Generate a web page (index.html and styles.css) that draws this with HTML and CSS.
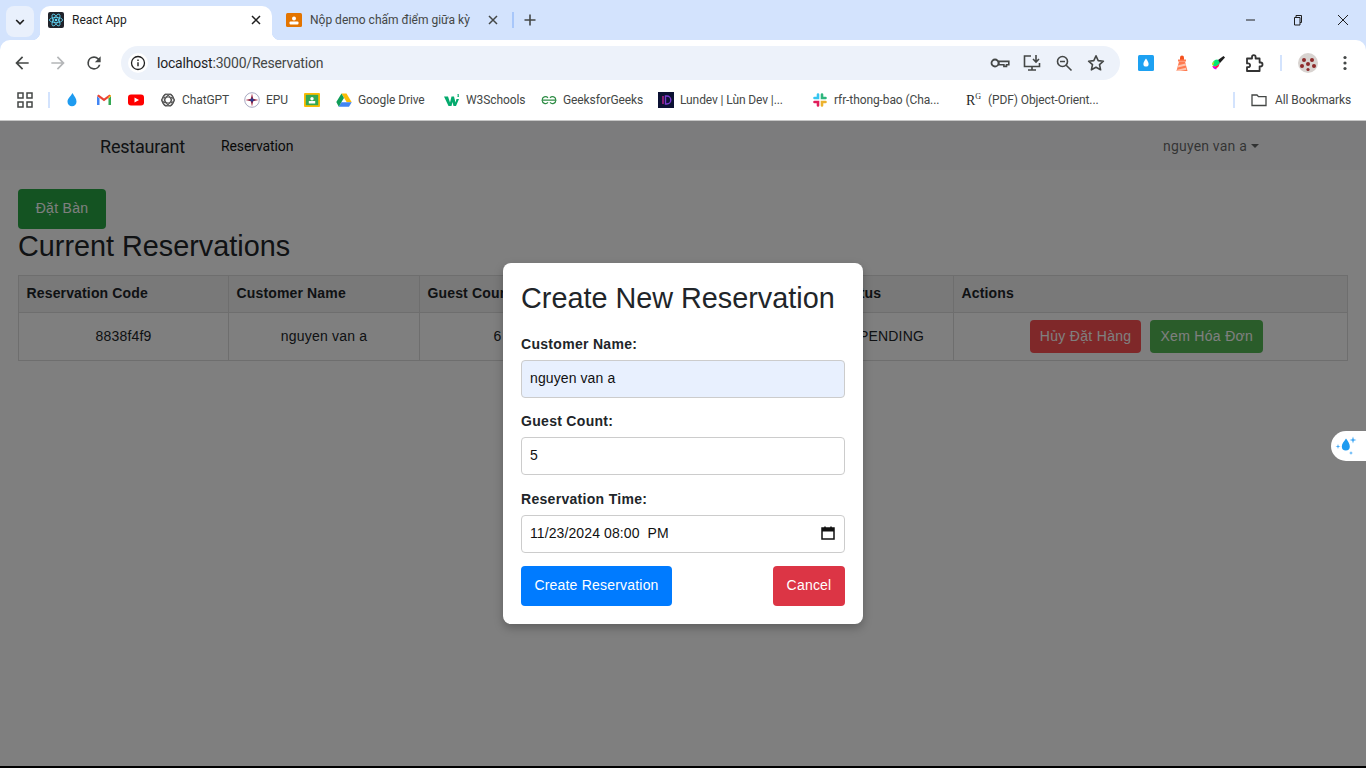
FILE: index.html
```html
<!DOCTYPE html>
<html lang="vi">
<head>
    <meta charset="UTF-8">
    <meta name="viewport" content="width=device-width, initial-scale=1.0">
    <title>React App</title>
    <link rel="stylesheet" href="styles.css">
</head>
<body>
    <!-- Pasek kart -->
    <header class="tabstrip">
        <div class="tab-search">
            <svg width="12" height="12" viewBox="0 0 12 12"><path d="M2.2 4l3.8 3.8L9.8 4" fill="none" stroke="#1f1f1f" stroke-width="1.7"/></svg>
        </div>
        <div class="tab tab-active">
            <svg class="favicon" viewBox="0 0 16 16">
                <rect width="16" height="16" rx="2" fill="#20232a"/>
                <g fill="none" stroke="#61dafb" stroke-width=".8">
                    <ellipse cx="8" cy="8" rx="6.6" ry="2.6"/>
                    <ellipse cx="8" cy="8" rx="6.6" ry="2.6" transform="rotate(60 8 8)"/>
                    <ellipse cx="8" cy="8" rx="6.6" ry="2.6" transform="rotate(120 8 8)"/>
                </g>
                <circle cx="8" cy="8" r="1.3" fill="#61dafb"/>
            </svg>
            <span class="tab-title">React App</span>
            <svg class="tab-close" viewBox="0 0 10 10"><path d="M1 1l8 8M9 1l-8 8" stroke="#1f1f1f" stroke-width="1.5"/></svg>
        </div>
        <div class="tab">
            <svg class="favicon" viewBox="0 0 16 16">
                <rect width="16" height="14" y="1" rx="1.5" fill="#e37400"/>
                <circle cx="8" cy="6.6" r="2" fill="#fff"/>
                <rect x="3.500" y="9.500" width="9" height="3" rx="1" fill="#fff"/>
            </svg>
            <span class="tab-title">Nộp demo chấm điểm giữa kỳ</span>
            <svg class="tab-close" viewBox="0 0 10 10"><path d="M1 1l8 8M9 1l-8 8" stroke="#444746" stroke-width="1.5"/></svg>
        </div>
        <span class="tab-sep"></span>
        <svg class="new-tab" width="12" height="12" viewBox="0 0 12 12"><path d="M6 .5v11M.5 6h11" stroke="#444746" stroke-width="1.6"/></svg>
        <div class="window-btns">
            <svg width="12" height="12" viewBox="0 0 12 12"><path d="M1 6h9" stroke="#1f1f1f" stroke-width="1"/></svg>
            <svg width="12" height="12" viewBox="0 0 12 12"><path d="M3.500 3.500h5.500v7.500h-5.500zM5 3.500V1.500h5.500v7H9" fill="none" stroke="#1f1f1f" stroke-width="1"/></svg>
            <svg width="12" height="12" viewBox="0 0 12 12"><path d="M1 1l10 10M11 1l-10 10" stroke="#1f1f1f" stroke-width="1"/></svg>
        </div>
    </header>

    <!-- Pasek adresu -->
    <div class="toolbar">
        <svg class="nav-icon" viewBox="0 0 24 24"><path d="M20 11H7.800l5.600-5.600L12 4l-8 8 8 8 1.400-1.400L7.800 13H20z" fill="#444746"/></svg>
        <svg class="nav-icon" viewBox="0 0 24 24"><path d="M4 11h12.200l-5.600-5.600L12 4l8 8-8 8-1.400-1.400 5.600-5.600H4z" fill="#b4b6b8"/></svg>
        <svg class="nav-icon" viewBox="0 0 24 24"><path d="M17.650 6.350A7.960 7.960 0 0 0 12 4a8 8 0 1 0 7.730 10h-2.080A6 6 0 1 1 12 6c1.660 0 3.140.69 4.220 1.780L13 11h7V4z" fill="#444746"/></svg>
        <div class="omnibox">
            <span class="info-chip">
                <svg width="16" height="16" viewBox="0 0 16 16"><circle cx="8" cy="8" r="6.500" fill="none" stroke="#1f1f1f" stroke-width="1.300"/><path d="M8 7.200v4M8 4.600v1.300" stroke="#1f1f1f" stroke-width="1.400"/></svg>
            </span>
            <span class="url"><span class="url-host">localhost</span>:3000/Reservation</span>
            <div class="omni-actions">
                <svg class="omni-icon" viewBox="0 0 20 20"><circle cx="5" cy="10" r="3.500" fill="none" stroke="#444746" stroke-width="1.800"/><path d="M8.800 8.400h10v3.400h-2.300v1.600h-2.600v-1.600H8.800z" fill="none" stroke="#444746" stroke-width="1.600"/></svg>
                <svg class="omni-icon" viewBox="0 0 20 20"><path d="M9 3H2.500v10.500h15V10M6 17h8M10 13.500V17" fill="none" stroke="#444746" stroke-width="1.600"/><path d="M14 2v6.500M11 6l3 3 3-3" fill="none" stroke="#444746" stroke-width="1.600"/></svg>
                <svg class="omni-icon" viewBox="0 0 20 20"><circle cx="8.500" cy="8.500" r="5" fill="none" stroke="#444746" stroke-width="1.600"/><path d="M12.200 12.200L17.500 17.500M6 8.500h5" stroke="#444746" stroke-width="1.600"/></svg>
                <svg class="omni-icon" viewBox="0 0 20 20"><path d="M10 2.800l2.200 4.800 5.200.6-3.900 3.500 1.100 5.100L10 14.200l-4.600 2.600 1.100-5.100L2.600 8.200l5.200-.6z" fill="none" stroke="#444746" stroke-width="1.600" stroke-linejoin="round"/></svg>
            </div>
        </div>
        <div class="extensions">
            <svg class="ext-icon" viewBox="0 0 16 16"><rect width="16" height="16" rx="1.500" fill="#1da1f2"/><path d="M8 3.500c1.500 2.300 2.600 3.700 2.600 5.400a2.600 2.600 0 0 1-5.200 0C5.400 7.200 6.500 5.800 8 3.500z" fill="#fff"/></svg>
            <svg class="ext-icon" viewBox="0 0 16 16"><path d="M6 2.500a2 2 0 0 1 4 0V5H6z" fill="#f4511e"/><rect x="4" y="4.500" width="8" height="2" fill="#ff7a50"/><path d="M5 6.500h6L13.500 16h-11z" fill="#ff7a50"/><path d="M4.300 10.300l7.300-1.700.5 2-8.300 1.800zM3.200 14.800l8.700-2 .5 2-6 1.200H3z" fill="#ffc4ae"/></svg>
            <svg class="ext-icon" viewBox="0 0 16 16"><path d="M2 9c.5-2.500 3-4.500 5.500-4.500l2.500 3C9 11 3.500 13 2 9z" fill="#00e676"/><path d="M2.500 11C4.500 12 8 11 10 7.500L8.500 11.500c-1.500 2-4.500 2-6 0z" fill="#ff1744"/><path d="M2.500 11.500c1 2.500 3 3.500 4.500 2.200L4.500 11.800z" fill="#d500f9"/><path d="M2 9l2.500-3L3 10.500z" fill="#ffea00"/><path d="M8 5l5.500-4 1.500 1.500L10 8z" fill="#1f1f1f"/></svg>
            <svg class="ext-icon ext-puzzle" viewBox="0 0 20 20"><path d="M3 5.500h5V4a1.800 1.800 0 0 1 3.600 0v1.500h4v4h1a1.900 1.900 0 0 1 0 3.800h-1V18H3v-3.800h1.200a1.900 1.900 0 0 0 0-3.800H3z" fill="none" stroke="#333" stroke-width="1.800" stroke-linejoin="round"/></svg>
            <span class="toolbar-sep"></span>
            <svg class="avatar" viewBox="0 0 20 20">
                <circle cx="10" cy="10" r="10" fill="#d8d3d0"/>
                <g fill="#8e2a2a">
                    <circle cx="6" cy="7" r="2"/><circle cx="14" cy="7" r="2"/>
                    <circle cx="4" cy="13" r="2"/><circle cx="16" cy="13" r="2"/>
                    <circle cx="10" cy="11" r="2"/><circle cx="10" cy="16.500" r="1.600"/>
                </g>
            </svg>
            <svg class="kebab" width="4" height="16" viewBox="0 0 4 16"><circle cx="2" cy="2.500" r="1.600" fill="#444746"/><circle cx="2" cy="8" r="1.600" fill="#444746"/><circle cx="2" cy="13.500" r="1.600" fill="#444746"/></svg>
        </div>
    </div>

    <!-- Zakładki -->
    <nav class="bookmarks">
        <svg class="apps-icon" viewBox="0 0 16 16"><g fill="none" stroke="#444746" stroke-width="1.500"><rect x="1" y="1" width="5" height="5"/><rect x="10" y="1" width="5" height="5"/><rect x="1" y="10" width="5" height="5"/><rect x="10" y="10" width="5" height="5"/></g></svg>
        <span class="bm-sep"></span>
        <a class="bm">
            <svg class="bm-icon" viewBox="0 0 16 16"><path d="M8.500 1c2 3.500 4 5.600 4 8.700a4.500 4.500 0 0 1-9 0C3.500 6.600 6.500 4.500 8.500 1z" fill="#1e9bf0"/></svg>
        </a>
        <a class="bm">
            <svg class="bm-icon" viewBox="0 0 16 16"><path d="M1 4v9h2.500V6.500z" fill="#4285f4"/><path d="M12.500 6.500V13H15V4z" fill="#34a853"/><path d="M1 4l7 5.200L15 4l-1.500-1.500L8 6.500 2.500 2.500z" fill="#ea4335"/><path d="M12.500 4.500L15 3v1l-2.500 2.500z" fill="#fbbc04"/></svg>
        </a>
        <a class="bm">
            <svg class="bm-icon" viewBox="0 0 16 16"><rect y="2.500" width="16" height="11" rx="3" fill="#f00"/><path d="M6.500 5.500L11 8l-4.500 2.500z" fill="#fff"/></svg>
        </a>
        <a class="bm">
            <svg class="bm-icon" viewBox="0 0 16 16"><g fill="none" stroke="#555" stroke-width="1.100"><circle cx="8" cy="8" r="6"/><ellipse cx="8" cy="8" rx="6.500" ry="3" transform="rotate(60 8 8)"/><ellipse cx="8" cy="8" rx="6.500" ry="3" transform="rotate(120 8 8)"/><ellipse cx="8" cy="8" rx="6.500" ry="3"/></g></svg>
            <span class="bm-chat">ChatGPT</span>
        </a>
        <a class="bm">
            <svg class="bm-icon" viewBox="0 0 16 16"><circle cx="8" cy="8" r="7.300" fill="#fff" stroke="#a9a9c2" stroke-width="1"/><path d="M8 1.500L9.200 6.800 14.500 8 9.200 9.200 8 14.500 6.800 9.200 1.500 8 6.800 6.800z" fill="#a4243b"/><path d="M8 5l1 2 2 1-2 1-1 2-1-2-2-1 2-1z" fill="#2a3a8c"/></svg>
            <span class="bm-epu">EPU</span>
        </a>
        <a class="bm">
            <svg class="bm-icon" viewBox="0 0 16 16"><rect y="1" width="16" height="14" rx="1" fill="#fbbc04"/><rect x="1.800" y="2.800" width="12.400" height="10.400" fill="#34a853"/><circle cx="8" cy="6.800" r="1.700" fill="#fff"/><rect x="4.800" y="9" width="6.400" height="2.500" fill="#fff"/></svg>
        </a>
        <a class="bm">
            <svg class="bm-icon" viewBox="0 0 16 16"><path d="M5.500 1.500h5l5.200 8.800h-5z" fill="#fbbc04"/><path d="M5.300 10.300h10.400L13 14.700H2.700z" fill="#4285f4"/><path d="M5.500 1.500L8 6 5.300 10.300 2.800 14.700.3 10z" fill="#0f9d58"/></svg>
            <span class="bm-drive">Google Drive</span>
        </a>
        <a class="bm">
            <svg class="bm-icon" viewBox="0 0 16 16"><path d="M0 4.500h4l2 6 1.500-6h2.500l1.500 6 1-3.500h2.500L12 14H9.500L8.500 10 7.500 14H4.500z" fill="#04aa6d"/><path d="M13 2h2v.8h-1v.4h1V5h-2v-.5h1.300v-.6h-1v-.4h1v-.9H13z" fill="#04aa6d"/></svg>
            <span class="bm-w3">W3Schools</span>
        </a>
        <a class="bm">
            <svg class="bm-icon" viewBox="0 0 16 16"><g fill="none" stroke="#2f8d46" stroke-width="1.200"><path d="M8 8.200H1.200a3.300 3.300 0 0 1 5.800-2.400M8 8.200h6.800A3.300 3.300 0 0 0 9 5.800"/><path d="M1.200 8.200a3.300 3.300 0 0 0 5.800 2.200M14.800 8.200a3.300 3.300 0 0 1-5.800 2.200"/></g></svg>
            <span class="bm-gfg">GeeksforGeeks</span>
        </a>
        <a class="bm">
            <svg class="bm-icon" viewBox="0 0 16 16"><rect width="16" height="16" fill="#0c1133"/><path d="M5 4v8" stroke="#c0258f" stroke-width="1.400"/><path d="M7.500 4h1.300a4 4 0 0 1 0 8H7.500z" fill="none" stroke="#7a3bd1" stroke-width="1.400"/></svg>
            <span class="bm-clip">Lundev | Lùn Dev |...</span>
        </a>
        <a class="bm">
            <svg class="bm-icon" viewBox="0 0 16 16"><g stroke-linecap="round" fill="none" stroke-width="2.600"><path d="M6 2.500v3.500H2.500" stroke="#36c5f0"/><path d="M13.500 6H10V2.500" stroke="#2eb67d"/><path d="M10 13.500V10h3.500" stroke="#ecb22e"/><path d="M2.500 10H6v3.500" stroke="#e01e5a"/></g></svg>
            <span class="bm-clip">rfr-thong-bao (Cha...</span>
        </a>
        <a class="bm">
            <span class="bm-rg">R<sup>G</sup></span>
            <span class="bm-clip">(PDF) Object-Orient...</span>
        </a>
        <span class="bm-sep bm-sep-end"></span>
        <a class="bm bm-all">
            <svg class="bm-icon" viewBox="0 0 16 16"><path d="M1 3h5l1.500 1.700H15V13.500H1z" fill="none" stroke="#444746" stroke-width="1.300"/></svg>
            <span>All Bookmarks</span>
        </a>
    </nav>

    <!-- Strona -->
    <main class="page">
        <div class="navbar">
            <span class="brand">Restaurant</span>
            <a class="nav-link">Reservation</a>
            <span class="user-menu">nguyen van a<i class="caret"></i></span>
        </div>

        <div class="content">
            <button class="btn btn-book">Đặt Bàn</button>
            <h2>Current Reservations</h2>
            <table class="res-table">
                <thead>
                    <tr>
                        <th class="col-code">Reservation Code</th>
                        <th class="col-name">Customer Name</th>
                        <th class="col-count">Guest Count</th>
                        <th class="col-time"></th>
                        <th class="col-status">Status</th>
                        <th>Actions</th>
                    </tr>
                </thead>
                <tbody>
                    <tr>
                        <td>8838f4f9</td>
                        <td>nguyen van a</td>
                        <td>6</td>
                        <td></td>
                        <td>PENDING</td>
                        <td class="td-actions">
                            <button class="btn btn-cancel">Hủy Đặt Hàng</button>
                            <button class="btn btn-bill">Xem Hóa Đơn</button>
                        </td>
                    </tr>
                </tbody>
            </table>
        </div>

        <div class="overlay">
            <form class="modal">
                <h2 class="modal-title">Create New Reservation</h2>
                <label class="field-label" for="customer">Customer Name:</label>
                <input class="field field-filled" id="customer" type="text" value="nguyen van a">
                <label class="field-label" for="guests">Guest Count:</label>
                <input class="field" id="guests" type="text" value="5">
                <label class="field-label field-label-time" for="time">Reservation Time:</label>
                <div class="field field-date">
                    <input class="date-text" id="time" type="text" value="11/23/2024 08:00  PM">
                    <svg width="16" height="16" viewBox="0 0 16 16"><path d="M2 3h12v11H2z" fill="none" stroke="#111" stroke-width="1.500"/><path d="M2 3h12v3.500H2z" fill="#111"/><path d="M5 1.500v2M11 1.500v2" stroke="#111" stroke-width="1.500"/></svg>
                </div>
                <div class="modal-actions">
                    <button class="modal-btn modal-create" type="button">Create Reservation</button>
                    <button class="modal-btn modal-cancel" type="button">Cancel</button>
                </div>
            </form>
        </div>

        <div class="float-widget">
            <svg width="24" height="24" viewBox="0 0 24 24">
                <path d="M13 4.500c2 3 3.800 5 3.800 8a4 4 0 0 1-8 0C8.800 9.800 11 7.500 13 4.500z" fill="#1e9bf0"/>
                <path d="M20 2.500l.8 2.700 2.700.8-2.700.8L20 9.500l-.8-2.700-2.700-.8 2.700-.8zM5 10l.6 1.900 1.900.6-1.900.6L5 15l-.6-1.900-1.900-.6 1.900-.6zM18 17l.5 1.500 1.500.5-1.500.5L18 21l-.5-1.500-1.500-.5 1.500-.5z" fill="#3ea6f5"/>
            </svg>
        </div>
    </main>
</body>
</html>
```
FILE: styles.css
```css
* {
    box-sizing: border-box;
    margin: 0;
    padding: 0;
}

html, body {
    height: 768px;
    overflow: hidden;
}

body {
    font-family: "Roboto", "Noto Sans", sans-serif;
    background-color: #d3e3fd;
    display: flex;
    flex-direction: column;
}

/* karty */
.tabstrip {
    height: 40px;
    flex: none;
    display: flex;
    align-items: flex-end;
    padding-left: 6px;
}

.tab-search {
    width: 28px;
    height: 31px;
    margin-bottom: 3px;
    margin-right: 6px;
    background-color: #e9f0fc;
    border-radius: 8px;
    display: flex;
    align-items: center;
    justify-content: center;
}

.tab {
    width: 232px;
    height: 34px;
    display: flex;
    align-items: center;
    padding: 0 8px 6px 8px;
    font-size: 12px;
    color: #444746;
    position: relative;
}

.tab + .tab {
    padding-left: 14px;
    padding-right: 14px;
    width: 243px;
}

.tab-active {
    background-color: #fff;
    color: #1f1f1f;
    border-radius: 10px 10px 0 0;
}

.tab-active::before, .tab-active::after {
    content: "";
    position: absolute;
    bottom: 0;
    width: 8px;
    height: 8px;
}

.tab-active::before {
    left: -8px;
    background: radial-gradient(circle at 0 0, transparent 8px, #fff 8.5px);
}

.tab-active::after {
    right: -8px;
    background: radial-gradient(circle at 100% 0, transparent 8px, #fff 8.5px);
}

.favicon {
    width: 16px;
    height: 16px;
    flex: none;
    margin-right: 8px;
}

.tab-title {
    flex: 1;
    white-space: nowrap;
    overflow: hidden;
}

.tab-close {
    width: 10px;
    height: 10px;
    flex: none;
    margin-right: 3px;
}

.tab-sep {
    width: 2px;
    height: 16px;
    background-color: #a8c7fa;
    margin: 0 0 12px -3px;
}

.new-tab {
    margin: 0 0 14px 10px;
}

.window-btns {
    margin-left: auto;
    display: flex;
    gap: 34px;
    padding-right: 17px;
    margin-bottom: 14px;
}

/* pasek adresu */
.toolbar {
    height: 45px;
    flex: none;
    background-color: #fff;
    border-radius: 10px 10px 0 0;
    display: flex;
    align-items: center;
    padding: 0 0 0 12px;
}

.nav-icon {
    width: 20px;
    height: 20px;
    margin-right: 16px;
    flex: none;
}

.omnibox {
    width: 999px;
    height: 34px;
    margin-left: 1px;
    background-color: #edf2fa;
    border-radius: 17px;
    display: flex;
    align-items: center;
    padding-left: 7px;
}

.info-chip {
    width: 20px;
    height: 20px;
    background-color: #fff;
    border-radius: 50%;
    display: flex;
    align-items: center;
    justify-content: center;
    margin-right: 9px;
}

.url {
    font-size: 14px;
    letter-spacing: -.2px;
    color: #444746;
}

.url-host {
    color: #1f1f1f;
}

.omni-actions {
    margin-left: auto;
    display: flex;
    gap: 12px;
    padding-right: 14px;
}

.omni-icon {
    width: 20px;
    height: 20px;
}

.extensions {
    display: flex;
    align-items: center;
    padding-left: 18px;
}

.ext-icon {
    width: 16px;
    height: 16px;
    margin-right: 20px;
    flex: none;
}

.ext-puzzle {
    width: 20px;
    height: 20px;
    margin: 0 16px 0 -2px;
}

.toolbar-sep {
    width: 2px;
    height: 16px;
    background-color: #d3e3fd;
    margin-right: 16px;
}

.avatar {
    width: 20px;
    height: 20px;
    margin-right: 25px;
}

/* zakladki */
.bookmarks {
    height: 36px;
    flex: none;
    background-color: #fff;
    border-bottom: 1px solid #c7c7c7;
    display: flex;
    align-items: center;
    padding: 0 15px 5px 17px;
    font-size: 12px;
    letter-spacing: -.1px;
    color: #444746;
}

.apps-icon {
    width: 16px;
    height: 16px;
    flex: none;
}

.bm-sep {
    width: 2px;
    height: 16px;
    background-color: #d3e3fd;
    margin: 0 6px 0 15px;
}

.bm-sep-end {
    margin: 0 0 0 auto;
}

.bm {
    display: flex;
    align-items: center;
    padding: 0 8px;
    white-space: nowrap;
}

.bm-all {
    padding-right: 0;
    margin-left: 8px;
    padding-left: 8px;
}

.bm-icon {
    width: 16px;
    height: 16px;
    flex: none;
}

.bm-icon + span {
    margin-left: 6px;
}

.bm-all .bm-icon + span {
    margin-left: 8px;
}

.bm-chat { width: 46px; }
.bm-epu { width: 22px; }
.bm-drive { width: 70px; }
.bm-w3 { width: 59px; }
.bm-gfg { width: 79px; }

.bm-clip {
    width: 116px;
    overflow: hidden;
}

.bm-rg {
    width: 16px;
    margin-right: 6px;
    font-family: "Liberation Serif", serif;
    font-size: 14px;
    color: #1f1f1f;
}

.bm-rg sup {
    font-size: 8px;
}

/* strona */
.page {
    flex: 1;
    background-color: #fff;
    position: relative;
    font-family: "Liberation Sans", Arial, sans-serif;
    font-size: 14px;
    color: #212529;
    border-bottom: 2px solid #000;
}

.navbar {
    height: 49px;
    background-color: #f8f9fa;
    display: flex;
    align-items: center;
    padding: 0 107px 0 100px;
    font-family: "Roboto", "Noto Sans", sans-serif;
}

.brand {
    font-size: 18px;
    letter-spacing: -.2px;
    color: #212529;
    margin-right: 36px;
    padding-top: 2px;
}

.nav-link {
    color: #111;
    font-size: 14px;
    letter-spacing: -.1px;
}

.user-menu {
    margin-left: auto;
    color: rgba(0, 0, 0, .6);
    font-size: 14px;
    letter-spacing: .2px;
}

.caret {
    display: inline-block;
    margin-left: 4px;
    vertical-align: 3px;
    border-top: 4px solid;
    border-left: 4px solid transparent;
    border-right: 4px solid transparent;
}

.content {
    padding: 19px 18px 0;
}

.btn {
    border: none;
    border-radius: 4px;
    color: #fff;
    font-family: "Liberation Sans", Arial, sans-serif;
    font-size: 14px;
    letter-spacing: .3px;
}

.btn-book {
    display: block;
    width: 88px;
    height: 40px;
    padding-bottom: 2px;
    background-color: #28a745;
}

.content h2 {
    font-size: 28.8px;
    font-weight: 400;
    line-height: 34px;
    margin-bottom: 12px;
}

.res-table {
    width: 1330px;
    border-collapse: collapse;
    table-layout: fixed;
}

.res-table th, .res-table td {
    border: 1px solid #ddd;
}

.res-table th {
    height: 37px;
    padding: 0 8px 2px 7.5px;
    text-align: left;
    background-color: #f2f2f2;
    letter-spacing: .15px;
}

.res-table td {
    height: 48px;
    padding: 0 8px 2px;
    text-align: center;
    letter-spacing: .2px;
}

.res-table .td-actions {
    padding-bottom: 0;
}

.col-code { width: 210px; }
.col-name { width: 191px; }
.col-count { width: 156px; }
.col-time { width: 254px; }
.col-status { width: 124px; }

.btn-cancel, .btn-bill {
    height: 33px;
    padding: 0 10px 2px;
}

.btn-cancel {
    background-color: #ff5052;
    margin-right: 5px;
}

.btn-bill {
    background-color: #54b854;
    margin-right: 8px;
}

/* modal */
.overlay {
    position: absolute;
    inset: 0;
    background-color: rgba(0, 0, 0, .5);
    display: flex;
    justify-content: center;
    padding-top: 142px;
}

.modal {
    width: 360px;
    height: 361px;
    padding: 18px;
    background-color: #fff;
    border-radius: 8px;
    box-shadow: 0 4px 10px rgba(0, 0, 0, .25);
    display: flex;
    flex-direction: column;
}

.modal-title {
    font-size: 28.8px;
    font-weight: 400;
    line-height: 34px;
    margin-bottom: 21px;
    white-space: nowrap;
}

.field-label {
    font-weight: 700;
    font-size: 14px;
    line-height: 17px;
    letter-spacing: .3px;
    margin-bottom: 7px;
}

.field-label-time {
    margin-top: 1px;
}

.field {
    width: 324px;
    height: 38px;
    flex: none;
    border: 1px solid #ccc;
    border-radius: 4px;
    padding: 0 8px 2px;
    margin-bottom: 15px;
    font-family: "Liberation Sans", Arial, sans-serif;
    font-size: 14px;
    letter-spacing: .1px;
    color: #111;
    background-color: #fff;
}

.field-filled {
    background-color: #e8f0fe;
}

.field-date {
    display: flex;
    align-items: center;
    justify-content: space-between;
    margin-bottom: 13px;
}

.date-text {
    flex: 1;
    border: none;
    outline: none;
    font: inherit;
    letter-spacing: inherit;
    color: inherit;
    white-space: pre;
}

.modal-actions {
    display: flex;
    justify-content: space-between;
}

.modal-btn {
    height: 40px;
    padding-bottom: 2px;
    border: none;
    border-radius: 4px;
    color: #fff;
    font-family: "Liberation Sans", Arial, sans-serif;
    font-size: 14px;
    letter-spacing: .2px;
}

.modal-create {
    width: 151px;
    background-color: #007bff;
}

.modal-cancel {
    width: 72px;
    background-color: #dc3545;
}

.float-widget {
    position: absolute;
    right: 0;
    top: 310px;
    width: 35px;
    height: 30px;
    background-color: #fff;
    border-radius: 15px 0 0 15px;
    display: flex;
    align-items: center;
    padding-left: 2px;
}
```
